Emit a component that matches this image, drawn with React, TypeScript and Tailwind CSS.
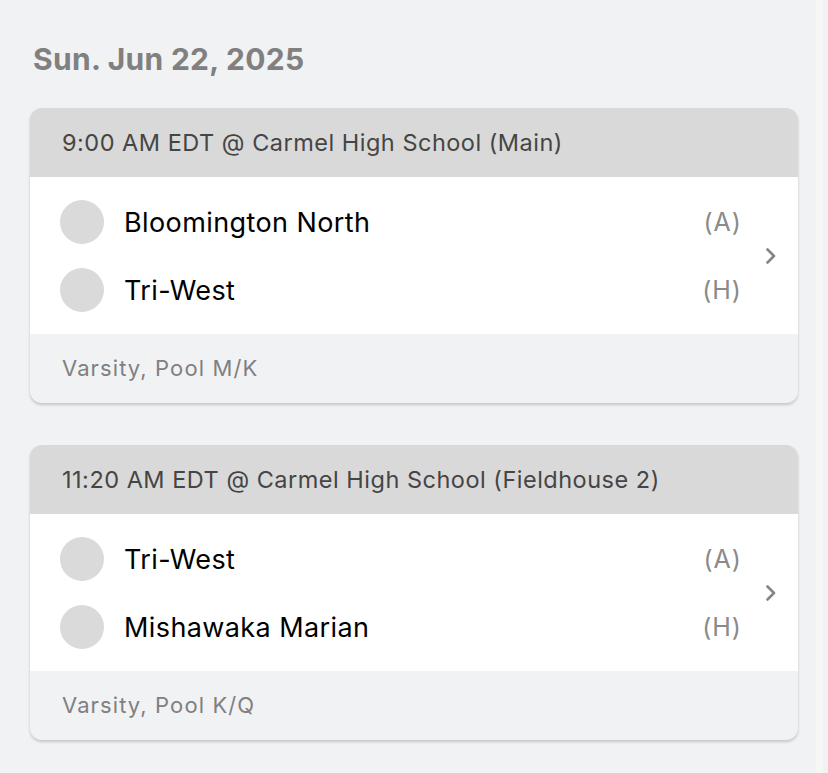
type Team = { name: string; side: string };

type Game = {
  time: string;
  venue: string;
  teams: Team[];
  label: string;
};

const games: Game[] = [
  {
    time: '9:00 AM EDT',
    venue: 'Carmel High School (Main)',
    teams: [
      { name: 'Bloomington North', side: '(A)' },
      { name: 'Tri-West', side: '(H)' },
    ],
    label: 'Varsity, Pool M/K',
  },
  {
    time: '11:20 AM EDT',
    venue: 'Carmel High School (Fieldhouse 2)',
    teams: [
      { name: 'Tri-West', side: '(A)' },
      { name: 'Mishawaka Marian', side: '(H)' },
    ],
    label: 'Varsity, Pool K/Q',
  },
];

function Chevron() {
  return (
    <svg width="12" height="16" viewBox="0 0 12 16" fill="none">
      <path d="M2.5 1.5 L9 8 L2.5 14.5" stroke="#858585" strokeWidth="2.6" strokeLinecap="round" strokeLinejoin="round" />
    </svg>
  );
}

function GameCard({ game }: { game: Game }) {
  return (
    <div className="rounded-[12px] overflow-hidden shadow-[0_2px_3px_rgba(0,0,0,0.18)] bg-[#f1f2f4]">
      <div className="h-[69px] bg-[#d9d9d9] flex items-center pl-[32px] text-[23.5px] text-[#454545] tracking-[0.5px]">
        {game.time} @ {game.venue}
      </div>
      <div className="bg-white h-[157px] flex items-center">
        <div className="flex-1 flex flex-col gap-[24px] pl-[30px]">
          {game.teams.map((team, i) => (
            <div key={i} className="flex items-center h-[44px]">
              <div className="w-[44px] h-[44px] rounded-full bg-[#dadada]" />
              <div className="ml-[20px] pt-[3px] text-[27px] text-black flex-1 tracking-[0.4px]">{team.name}</div>
              <div className="pt-[2px] text-[25px] text-[#8a8a8a] text-right tracking-[1px]">{team.side}</div>
            </div>
          ))}
        </div>
        <div className="w-[56px] flex justify-center pl-[2px]">
          <Chevron />
        </div>
      </div>
      <div className="h-[69px] flex items-center pl-[32px] text-[22px] text-[#808080] tracking-[1.1px]">
        {game.label}
      </div>
    </div>
  );
}

export default function App() {
  return (
    <div
      className="min-h-[773px] bg-[#f1f2f4] flex"
      style={{ fontFamily: 'Inter, "Noto Sans", sans-serif' }}
    >
      <div className="w-[816px] pl-[30px] pr-[18px]">
        <h1 className="pt-[37px] text-[30px] font-bold text-[#808080] leading-[45px] pl-[3px] tracking-[0.3px]">
          Sun. Jun 22, 2025
        </h1>
        <div className="mt-[26px] flex flex-col gap-[42px]">
          {games.map((game, i) => (
            <GameCard key={i} game={game} />
          ))}
        </div>
      </div>
      <div className="w-[7px] bg-[#f7f7f8]" />
      <div className="w-[5px]" />
    </div>
  );
}
